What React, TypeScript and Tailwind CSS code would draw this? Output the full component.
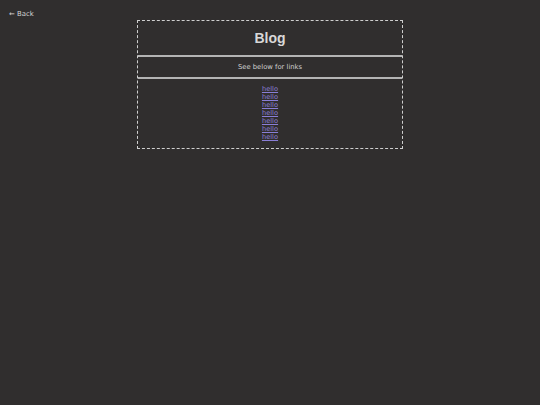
export default function App() {
  const links = Array.from({ length: 7 }, () => "hello");
  return (
    <div
      className="min-h-[405px] bg-[#302e2e] text-[#d4d4d4]"
      style={{ fontFamily: '"DejaVu Sans", Verdana, sans-serif' }}
    >
      <div className="pl-[9px] pt-[10px] text-[6.9px] leading-[9px]">
        <a href="#" className="text-[#d4d4d4] no-underline">← Back</a>
      </div>
      <div className="mx-auto mt-[1px] w-[266px] border border-dashed border-[#cfcfcf]">
        <div className="flex h-[34px] items-center justify-center">
          <h1
            className="text-[14px] font-bold text-[#d8d8d8]"
            style={{ fontFamily: '"Liberation Sans", Arial, sans-serif' }}
          >
            Blog
          </h1>
        </div>
        <div className="h-[2px] bg-[#b4b4b4]" />
        <div className="flex h-[20px] items-center justify-center text-[6.8px] text-[#cfcfcf]">
          See below for links
        </div>
        <div className="h-[2px] bg-[#b4b4b4]" />
        <div className="flex flex-col items-center pt-[6px] pb-[7px]">
          {links.map((l, i) => (
            <a
              key={i}
              href="#"
              className="text-[6.7px] leading-[8px] text-[#8a7ed6] underline"
            >
              {l}
            </a>
          ))}
        </div>
      </div>
    </div>
  );
}
